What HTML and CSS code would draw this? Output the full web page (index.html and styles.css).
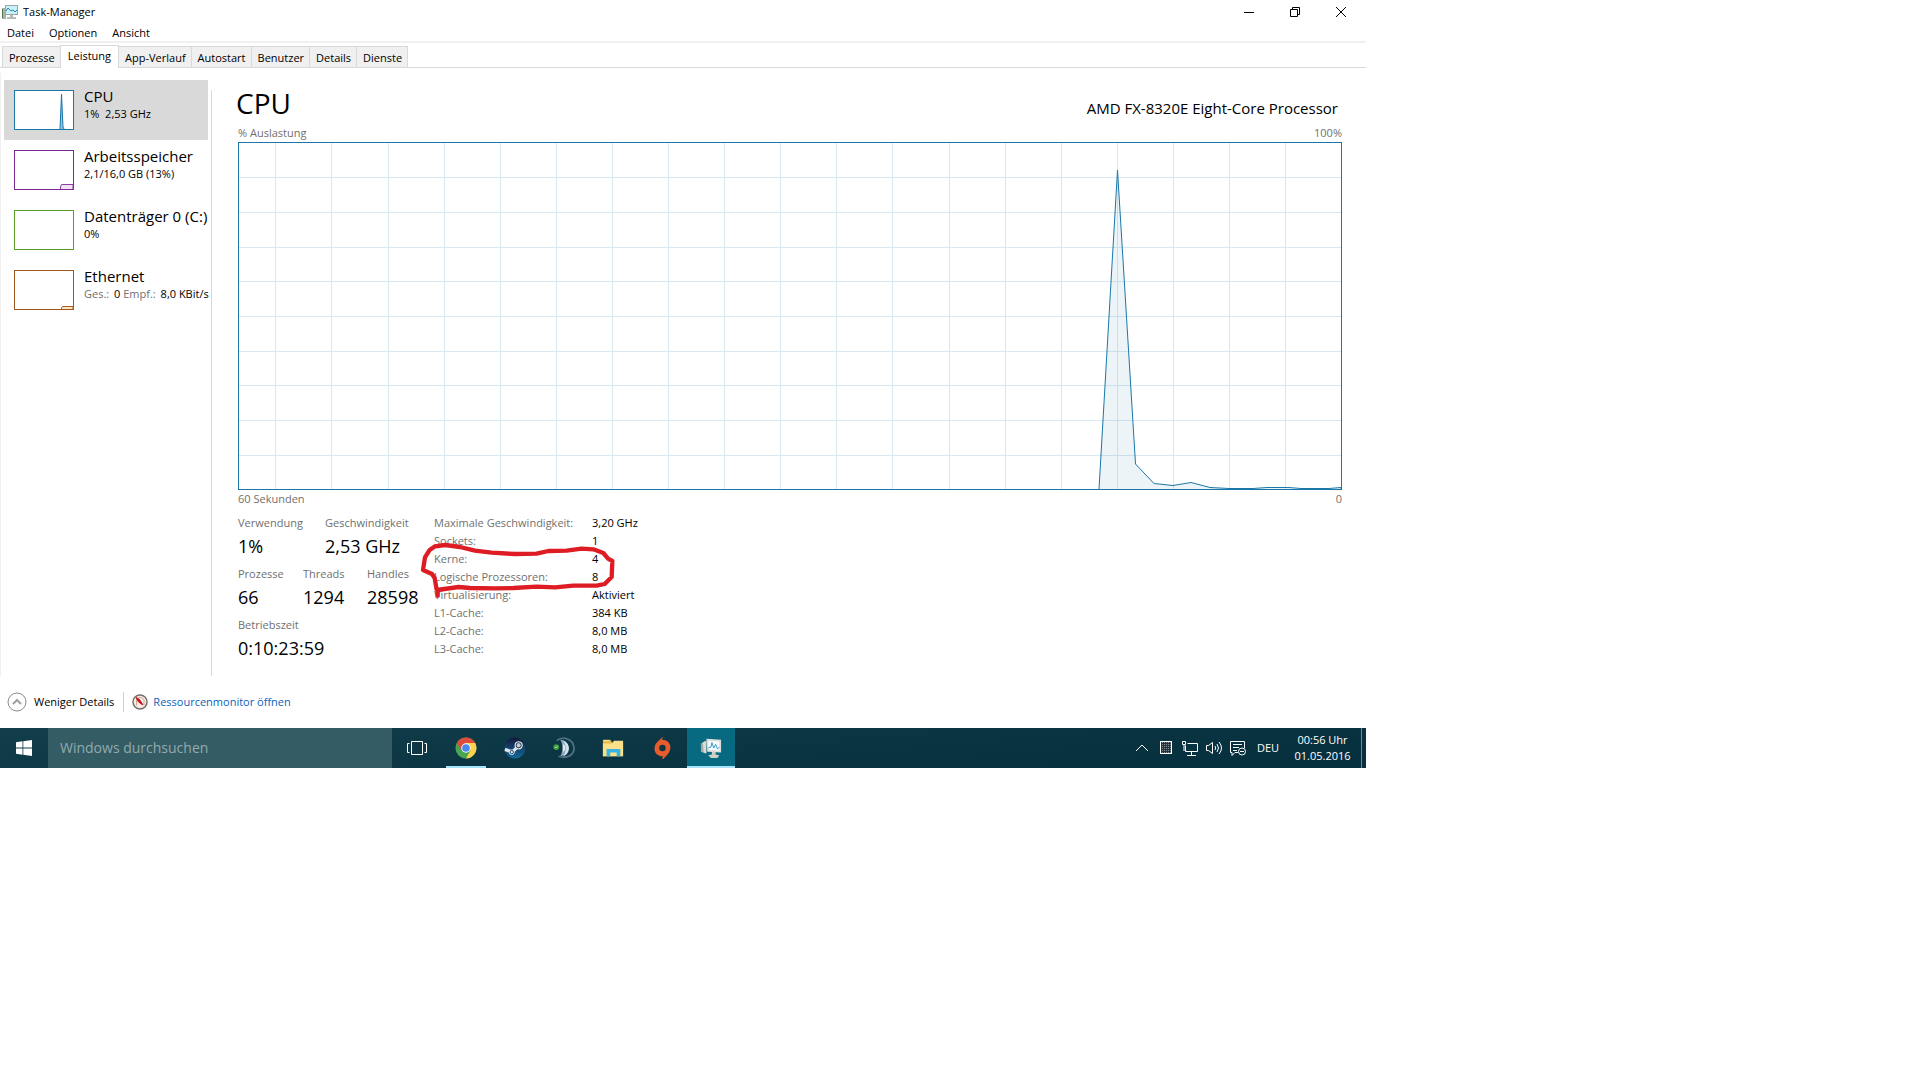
FILE: index.html
```html
<!DOCTYPE html>
<html lang="de">
<head>
<meta charset="utf-8">
<title>Task-Manager</title>
<link rel="stylesheet" href="styles.css">
</head>
<body>
<div class="desktop">
  <main class="window">
    <header class="titlebar">
      <svg class="app-icon" viewBox="0 0 16 16" aria-hidden="true">
        <rect x="0" y="4" width="4" height="11" fill="#a9b0ae"/><rect x="0" y="5" width="1" height="9" fill="#4f7a4c"/>
        <rect x="3" y="1" width="13" height="10" fill="#9aa5a8"/><rect x="4" y="2" width="11" height="8" fill="#c9f1fb"/>
        <path d="M4 7l2-3 3 3 2-1 2 2 2-2" fill="none" stroke="#2a86a8"/>
        <path d="M8 11h3v2h3v2H5v-2h3z" fill="#b6bab8"/>
      </svg>
      <h1 class="title">Task-Manager</h1>
      <div class="controls">
        <button class="control" aria-label="Minimieren"><svg viewBox="0 0 12 12"><path d="M1 6.500h10"/></svg></button>
        <button class="control" aria-label="Verkleinern"><svg viewBox="0 0 12 12"><path d="M1.500 3.500h7v7h-7zM3.500 3.500v-2h7v7h-2"/></svg></button>
        <button class="control" aria-label="Schließen"><svg viewBox="0 0 12 12"><path d="M1 1l10 10M11 1L1 11"/></svg></button>
      </div>
    </header>
    <nav class="menu">
      <button>Datei</button><button>Optionen</button><button>Ansicht</button>
    </nav>
    <div class="tabs" role="tablist">
      <button class="tab" role="tab">Prozesse</button>
      <button class="tab active" role="tab" aria-selected="true">Leistung</button>
      <button class="tab" role="tab">App-Verlauf</button>
      <button class="tab" role="tab">Autostart</button>
      <button class="tab" role="tab">Benutzer</button>
      <button class="tab" role="tab">Details</button>
      <button class="tab" role="tab">Dienste</button>
    </div>
    <div class="content">
      <aside class="sidebar">
        <button class="resource selected">
          <svg class="thumb cpu" viewBox="0 0 58 38"><path d="M45 38L46.500 3L48 36L49 38" fill="#8fc3e0" stroke="#1a77a8"/></svg>
          <span class="info"><span class="name">CPU</span><span class="detail">1%&nbsp; 2,53 GHz</span></span>
        </button>
        <button class="resource">
          <svg class="thumb memory" viewBox="0 0 58 38"><path d="M45.500 38V36L46.500 33.500H58V38" fill="#f1e2f6" stroke="#8b3fa4"/></svg>
          <span class="info"><span class="name">Arbeitsspeicher</span><span class="detail">2,1/16,0 GB (13%)</span></span>
        </button>
        <button class="resource">
          <svg class="thumb disk" viewBox="0 0 58 38"></svg>
          <span class="info"><span class="name">Datenträger 0 (C:)</span><span class="detail">0%</span></span>
        </button>
        <button class="resource">
          <svg class="thumb network" viewBox="0 0 58 38"><path d="M46.500 38V37L47.500 35.500H58V38" fill="#fbe3bd" stroke="#a3602a"/></svg>
          <span class="info"><span class="name">Ethernet</span><span class="detail"><i>Ges.:</i> 0 <i>Empf.:</i> 8,0 KBit/s</span></span>
        </button>
      </aside>
      <section class="panel">
        <div class="heading"><h2>CPU</h2><p>AMD FX-8320E Eight-Core Processor</p></div>
        <div class="axis top"><span>% Auslastung</span><span>100%</span></div>
        <svg class="graph" viewBox="0 0 1102 346" preserveAspectRatio="none" role="img" aria-label="CPU-Auslastung">
          <path class="grid" d="M36.500 0V346M92.500 0V346M149.500 0V346M205.500 0V346M261.500 0V346M317.500 0V346M373.500 0V346M429.500 0V346M485.500 0V346M541.500 0V346M597.500 0V346M653.500 0V346M710.500 0V346M766.500 0V346M822.500 0V346M878.500 0V346M934.500 0V346M990.500 0V346M1046.500 0V346M0 34.500H1102M0 69.500H1102M0 104.500H1102M0 138.500H1102M0 173.500H1102M0 208.500H1102M0 242.500H1102M0 277.500H1102M0 312.500H1102"/>
          <path class="load" d="M860 346L878.500 27L896.500 321L915 340.500L934 342.500L952 339.500L971 344.500L990 345.500H1014L1028 344.500H1050L1062 345.500H1090L1102 344.500V346"/>
        </svg>
        <div class="axis"><span>60 Sekunden</span><span class="zero">0</span></div>
        <div class="stats">
          <div class="counters">
            <dl class="two"><div><dt>Verwendung</dt><dd>1%</dd></div><div><dt>Geschwindigkeit</dt><dd>2,53 GHz</dd></div></dl>
            <dl class="three"><div><dt>Prozesse</dt><dd>66</dd></div><div><dt>Threads</dt><dd>1294</dd></div><div><dt>Handles</dt><dd>28598</dd></div></dl>
            <dl><div><dt>Betriebszeit</dt><dd>0:10:23:59</dd></div></dl>
          </div>
          <div class="specs">
            <table>
              <tr><th scope="row">Maximale Geschwindigkeit:</th><td>3,20 GHz</td></tr>
              <tr><th scope="row">Sockets:</th><td>1</td></tr>
              <tr><th scope="row">Kerne:</th><td>4</td></tr>
              <tr><th scope="row">Logische Prozessoren:</th><td>8</td></tr>
              <tr><th scope="row">Virtualisierung:</th><td>Aktiviert</td></tr>
              <tr><th scope="row">L1-Cache:</th><td>384 KB</td></tr>
              <tr><th scope="row">L2-Cache:</th><td>8,0 MB</td></tr>
              <tr><th scope="row">L3-Cache:</th><td>8,0 MB</td></tr>
            </table>
            <svg class="marker" viewBox="594 168 600 192" aria-hidden="true"><path d="M653 352L652 330L716 321L750 324L826 325L880 324L950 320L1005 322L1060 317L1130 317L1154 312L1175 291L1177 243L1164 236L1150 219L1120 208L1085 206L1040 212L985 213L950 221L885 222L815 218L765 212L720 201L676 195L645 199L628 211L615 232L609 270L636 282L644 294L650 330"/></svg>
          </div>
        </div>
      </section>
    </div>
    <footer class="footer">
      <button class="less"><svg viewBox="0 0 20 20"><circle cx="10" cy="10" r="9" fill="#fff" stroke="#8a8a8a"/><path d="M6 12l4-4 4 4" fill="none" stroke="#a0a0a0" stroke-width="2"/></svg>Weniger Details</button>
      <a class="monitor" href="#monitor"><svg viewBox="0 0 16 16"><circle cx="8" cy="8" r="7" fill="#f3eee8" stroke="#77706b" stroke-width="1.500"/><path d="M4.500 11.500V6a4 4 0 0 1 7.500 0v5" fill="none" stroke="#d9a490"/><path d="M4 3.500l3.500 2L11 11 6.500 8z" fill="#c4161c" stroke="#c4161c"/></svg>Ressourcenmonitor öffnen</a>
    </footer>
  </main>
  <div class="taskbar">
    <button class="task start" aria-label="Start"><svg viewBox="0 0 16 16"><path d="M0 2.300L6.500 1.300V7.600H0zM7.300 1.200L16 0V7.600H7.300zM0 8.400H6.500V14.700L0 13.700zM7.300 8.400H16V16L7.300 14.800z" fill="#fff"/></svg></button>
    <input class="search" type="search" placeholder="Windows durchsuchen" aria-label="Windows durchsuchen">
    <button class="task" aria-label="Taskansicht"><svg class="view" viewBox="0 0 20 14"><path d="M4.500.5h11v13h-11zM2.500 2.500h-2v9h2M17.500 2.500h2v9h-2" fill="none" stroke="#fff"/></svg></button>
    <button class="task running" aria-label="Chrome"><svg viewBox="0 0 24 24"><circle cx="12" cy="12" r="11.500" fill="#4aa553"/><path d="M2 6.500A11.500 11.500 0 0 1 22 6.500H12L7.200 14.700z" fill="#dd4b3e"/><path d="M22 6.500A11.500 11.500 0 0 1 12 23.500L16.800 14.800 12 6.500z" fill="#fdd14b"/><circle cx="12" cy="12" r="5.200" fill="#fff"/><circle cx="12" cy="12" r="4.200" fill="#4a89ee"/></svg></button>
    <button class="task" aria-label="Steam"><svg viewBox="0 0 24 24"><defs><linearGradient id="steam" x2="0" y2="1"><stop stop-color="#14193c"/><stop offset="1" stop-color="#136a9c"/></linearGradient></defs><circle cx="12" cy="12" r="11.500" fill="url(#steam)"/><path d="M1 13.500l8 3 7-7" fill="none" stroke="#dce3e8" stroke-width="3.500"/><circle cx="16" cy="9" r="4.500" fill="#dce3e8"/><circle cx="16" cy="9" r="2.800" fill="#c3ccd5" stroke="#1b2748"/><circle cx="8.500" cy="16.500" r="3" fill="#dce3e8"/><circle cx="8.500" cy="16.500" r="1.800" fill="none" stroke="#16436c"/></svg></button>
    <button class="task" aria-label="TeamSpeak"><svg viewBox="0 0 24 24"><path d="M4 4C10-1 22 1 23 12c0 8-8 12-17 9" fill="none" stroke="#4e6f84" stroke-width="2"/><path d="M8 3a9 9 0 0 1 0 18c3-5 3-13 0-18z" fill="#8fa9b9"/><path d="M11 4c8 2 9 14 0 17 4-5 4-12 0-17z" fill="#d4e2ec"/><path d="M11 8c3 1 3 7 0 8z" fill="#e9f0f4"/><circle cx="3.500" cy="11" r="3.200" fill="#3f9f45"/><path d="M2 11l1 1 2-2" fill="none" stroke="#c8efbd"/></svg></button>
    <button class="task" aria-label="Explorer"><svg viewBox="0 0 24 24"><path d="M1 3h8l2 3h12v15H1z" fill="#e6b94a"/><path d="M1 7h10l2-3h10v17H1z" fill="#fbe08a"/><path d="M2 4h6" stroke="#fff3bd"/><path d="M5 21v-8h15v8h-4v-4H9v4z" fill="#35b5e5"/></svg></button>
    <button class="task" aria-label="Origin"><svg viewBox="0 0 24 24"><path d="M13-1l-1 4c6 0 10 4 9 10-1 6-6 8-8 12h-1l1-4c-6 0-10-4-9-10C5 5 10 4 13-1z" fill="#e85b2b"/><circle cx="12.500" cy="12" r="3.500" fill="#0c3441"/></svg></button>
    <button class="task current" aria-label="Task-Manager"><svg viewBox="0 0 24 24"><path d="M1 7l5-3v14l-5-2z" fill="#a9aaa5"/><path d="M3 6l4-2v14l-3-1z" fill="#dedbd2"/><path d="M7 2l16 1v14L8 16z" fill="#dedfdb"/><path d="M9 4l12 1v10L9 14z" fill="#f5fbff"/><path d="M9 12l3-1 1-5 2 6 2-4 2 5 2-2" fill="none" stroke="#2e8ec5"/><path d="M13 16h4v3l4 1-2 3h-7l-3-3 4-1z" fill="#cfcfca"/></svg></button>
    <div class="tray">
      <button aria-label="Ausgeblendete Symbole"><svg viewBox="0 0 16 16"><path d="M2 11l6-6 6 6"/></svg></button>
      <button aria-label="Grafik"><svg viewBox="0 0 16 16"><defs><pattern id="dots" width="2" height="2" patternUnits="userSpaceOnUse"><rect width="2" height="2" fill="#263238" stroke="none"/><rect width="1" height="1" fill="#7d898e" stroke="none"/></pattern></defs><rect x="2.500" y="1.500" width="11" height="12" fill="url(#dots)"/></svg></button>
      <button aria-label="Netzwerk"><svg viewBox="0 0 16 16"><path d="M5.500 3.500h10v8h-12v-6M9.500 12v3M5 15.500h9M.5 1.500h3v3h-3zM2 5v6"/></svg></button>
      <button aria-label="Lautstärke"><svg viewBox="0 0 16 16"><path d="M.5 5.500h2l4-3v11l-4-3h-2zM9 6q1.500 2 0 4M11 4q3 4 0 8M13 2q5 6 0 12"/></svg></button>
      <button aria-label="Benachrichtigungen"><svg viewBox="0 0 16 16"><path d="M8 12.500H5l-3 3v-3H.5V1.500h14V8M3 4.500h9M3 7.500h6M3 10.500h4"/><circle cx="12" cy="11.500" r="3.500"/><path d="M10 11.500h4"/></svg></button>
      <button class="language">DEU</button>
      <button class="clock"><time datetime="2016-05-01T00:56">00:56 Uhr<br>01.05.2016</time></button>
      <button class="show-desktop" aria-label="Desktop anzeigen"></button>
    </div>
  </div>
</div>
</body>
</html>
```
FILE: styles.css
```css
* { box-sizing: border-box; }
body { margin: 0; background: #fff; color: #000; font: 11px/16px "Open Sans", "Noto Sans", sans-serif; }
button, input { margin: 0; padding: 0; border: 0; background: none; color: inherit; font: inherit; }
h1, h2, p, dl, dd { margin: 0; font-weight: 400; }
svg { display: block; flex: none; }
.desktop { width: 100%; max-width: 1366px; }

.titlebar { display: flex; align-items: center; height: 23px; padding-left: 2px; }
.app-icon { width: 16px; height: 16px; }
.title { margin-left: 5px; font-size: 11px; }
.controls { display: flex; margin-left: auto; height: 20px; padding-right: 2px; }
.control { display: grid; place-items: center; width: 46px; }
.control svg { width: 12px; height: 12px; fill: none; stroke: #000; }
.menu { display: flex; gap: 15px; height: 20px; padding: 2px 7px 0; border-bottom: 2px solid #f0f0f0; }
.menu button { line-height: 16px; }

.tabs { display: flex; align-items: flex-end; height: 25px; padding-left: 2px; border-bottom: 1px solid #d9d9d9; }
.tab { height: 21px; padding: 1px 5px 0 6px; border: 1px solid #d9d9d9; border-bottom: 0; border-left-width: 0; background: #f0f0f0; white-space: nowrap; }
.tab:first-child { border-left-width: 1px; border-right-width: 0; }
.tab.active { height: 23px; margin-bottom: -1px; padding: 0 7px 2px; border-left-width: 1px; background: #fff; }

.content { display: flex; margin-top: 5px; padding: 7px 24px 0 3px; border-left: 1px solid #f0f0f0; }
.sidebar { flex: none; width: 208px; }
.resource { display: flex; gap: 10px; width: 204px; height: 60px; padding: 10px; text-align: left; white-space: nowrap; }
.resource.selected { background: #d9d9d9; }
.thumb { width: 60px; height: 40px; border: 1px solid; background: #fff; }
.cpu { border-color: #1a77a8; }
.memory { border-color: #7d2a96; }
.disk { border-color: #5a9e28; }
.network { border-color: #a0561c; }
.name, .detail { display: block; }
.name { margin-top: -4px; font-size: 15px; line-height: 20px; }
.detail i { margin-right: 2px; color: #707070; font-style: normal; }

.panel { flex: 1; min-width: 0; margin-top: 10px; margin-left: -1px; padding-left: 26px; border-left: 1px solid #d9d9d9; }
.heading { display: flex; justify-content: space-between; align-items: center; height: 34px; padding-right: 4px; margin-left: -2px; }
.heading h2 { font-size: 28px; line-height: 32px; margin-top: -8px; }
.heading p { padding-top: 2px; font-size: 15px; line-height: 20px; }
.axis { display: flex; justify-content: space-between; height: 18px; color: #707070; line-height: 18px; }
.graph { width: 100%; height: 348px; border: 1px solid #1a77a8; }
.grid { fill: none; stroke: #d9e8ef; vector-effect: non-scaling-stroke; }
.load { fill: #1a77a8; fill-opacity: .08; stroke: #1a77a8; vector-effect: non-scaling-stroke; }
.stats { display: flex; padding: 6px 0 9px; }
.counters { flex: none; width: 196px; }
.counters dl { height: 51px; white-space: nowrap; }
.two, .three { display: grid; }
.two { grid-template-columns: 87px auto; }
.three { grid-template-columns: 65px 64px auto; }
dt { color: #707070; line-height: 18px; }
dd { font-size: 18px; line-height: 28px; }
.specs { position: relative; height: 153px; }
table { border-collapse: collapse; line-height: 18px; white-space: nowrap; }
th { width: 158px; padding: 0; color: #707070; font-weight: 400; text-align: left; }
td { padding: 0; }
.marker { position: absolute; left: -16px; top: 22px; width: 200px; height: 64px; fill: none; stroke: #dd1c24; stroke-width: 13; stroke-linejoin: round; pointer-events: none; }

.footer { display: flex; align-items: center; height: 52px; padding-left: 7px; }
.less { display: flex; align-items: center; gap: 7px; padding-right: 9px; border-right: 1px solid #d0d0d0; }
.less svg { width: 20px; height: 20px; }
.monitor { display: flex; align-items: center; gap: 5px; margin-left: 8px; color: #0a63bd; text-decoration: none; }
.monitor svg { width: 16px; height: 16px; }

.taskbar { display: flex; gap: 1px; height: 40px; color: #fff; background: linear-gradient(175deg, #123f4b 0%, #0c3643 45%, #062f3e 100%); }
.task { display: grid; place-items: center; flex: none; width: 48px; }
.task svg { width: 22px; height: 22px; }
.task.start svg { width: 16px; height: 16px; }
.task .view { width: 20px; height: 14px; }
.start { margin-right: -1px; }
.running { background: linear-gradient(#a5e4fa, #a5e4fa) center bottom / 40px 2px no-repeat; }
.current { background: #086a80; box-shadow: inset 0 -2px #a5e4fa; }
.search { flex: 0 1 344px; min-width: 0; padding: 0 12px; background: #345c64; font-size: 14px; }
.search::placeholder { color: #93aaae; opacity: 1; }
.tray { display: flex; margin-left: auto; }
.tray button { display: grid; place-items: center; width: 24px; }
.tray svg { width: 16px; height: 16px; fill: none; stroke: #fff; }
.tray .language { width: 36px; }
.tray .clock { width: 75px; padding-right: 2px; text-align: center; }
.tray .show-desktop { width: 5px; border-left: 1px solid #6d8b93; }
```
